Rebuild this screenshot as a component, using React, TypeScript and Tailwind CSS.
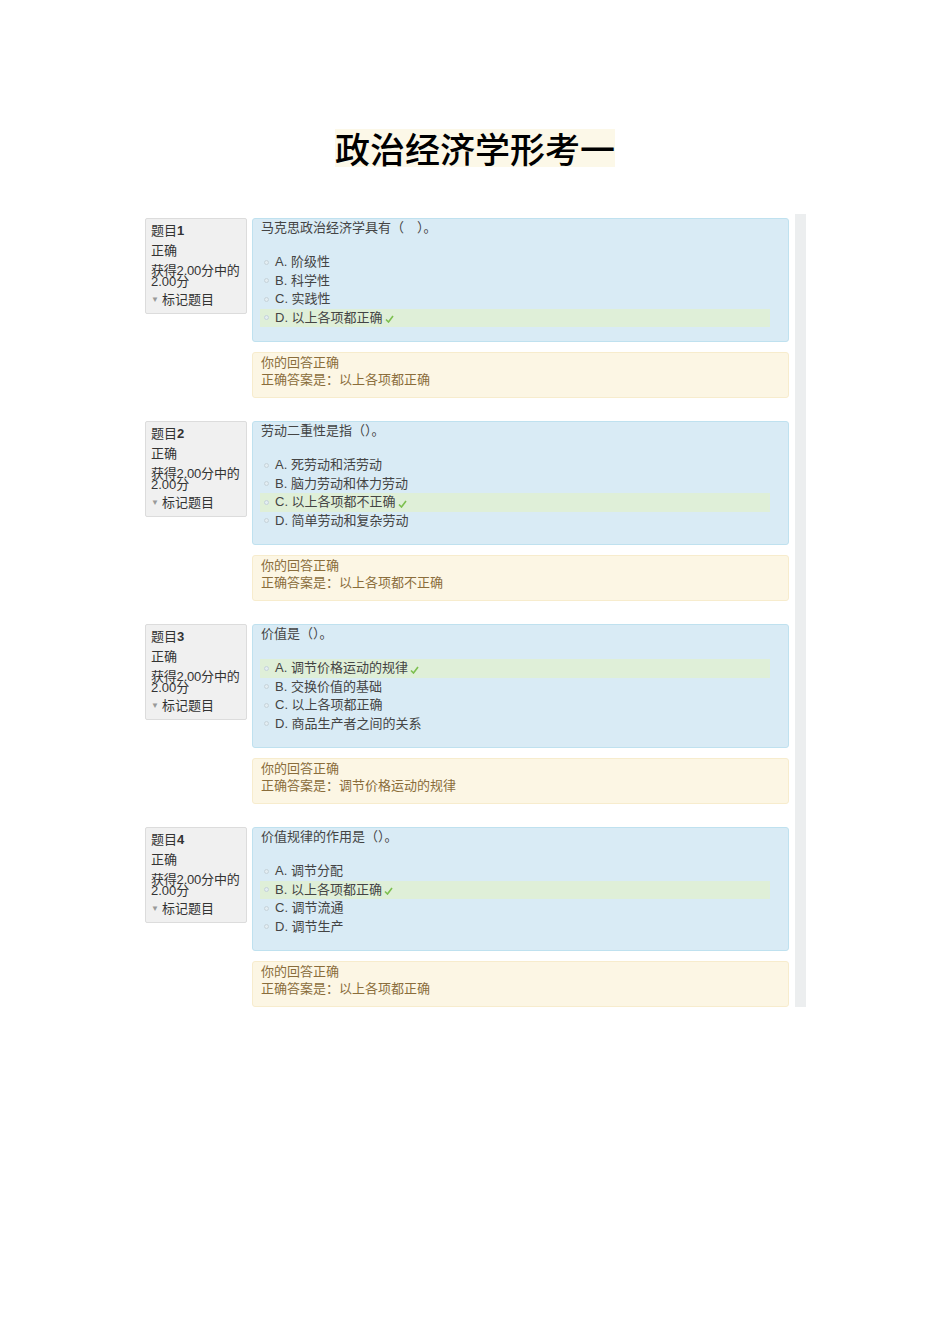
import { Fragment } from 'react';

type Question = {
  no: number;
  text: string;
  options: string[];
  correct: number;
  answer: string;
};

const questions: Question[] = [
  {
    no: 1,
    text: '马克思政治经济学具有（　）。',
    options: ['A. 阶级性', 'B. 科学性', 'C. 实践性', 'D. 以上各项都正确'],
    correct: 3,
    answer: '以上各项都正确',
  },
  {
    no: 2,
    text: '劳动二重性是指（）。',
    options: ['A. 死劳动和活劳动', 'B. 脑力劳动和体力劳动', 'C. 以上各项都不正确', 'D. 简单劳动和复杂劳动'],
    correct: 2,
    answer: '以上各项都不正确',
  },
  {
    no: 3,
    text: '价值是（）。',
    options: ['A. 调节价格运动的规律', 'B. 交换价值的基础', 'C. 以上各项都正确', 'D. 商品生产者之间的关系'],
    correct: 0,
    answer: '调节价格运动的规律',
  },
  {
    no: 4,
    text: '价值规律的作用是（）。',
    options: ['A. 调节分配', 'B. 以上各项都正确', 'C. 调节流通', 'D. 调节生产'],
    correct: 1,
    answer: '以上各项都正确',
  },
];

const font = 'font-["Liberation_Sans","Noto_Sans_CJK_SC",sans-serif]';

function Check() {
  return (
    <svg width="9" height="8" viewBox="0 0 9 8" className="ml-[2px] mt-[3px]">
      <path d="M1 4.5 L3.5 7 L8 1" fill="none" stroke="#7cbf4e" strokeWidth="1.6" />
    </svg>
  );
}

function InfoBox({ no }: { no: number }) {
  return (
    <div className="w-[102px] h-[96px] shrink-0 bg-[#f0f0f0] border border-[#dcdcdc] rounded-[2px] pl-[5px] pt-[1px] text-[13px] text-[#333] whitespace-nowrap">
      <div className="leading-[21px]">
        题目<span className="font-bold">{no}</span>
      </div>
      <div className="leading-[20px]">正确</div>
      <div className="leading-[20px] tracking-[-0.2px]">获得2.00分中的</div>
      <div className="leading-[11px] -mt-[5px]">2.00分</div>
      <div className="leading-[20px] mt-[3px] flex items-center">
        <span className="text-[8px] text-[#999] mr-[3px]">▼</span>标记题目
      </div>
    </div>
  );
}

function QuestionBlock({ q }: { q: Question }) {
  return (
    <div className="flex gap-[5px]">
      <InfoBox no={q.no} />
      <div className="w-[539px] flex flex-col">
        <div className="h-[124px] bg-[#d9ebf5] border border-[#bfe1ef] rounded-[3px] px-[7px] pt-[0px] text-[13px] text-[#444]">
          <div className="leading-[18px] pl-[1px]">{q.text}</div>
          <div className="mt-[16px] flex flex-col">
            {q.options.map((o, i) => (
              <Fragment key={o}>
                <div
                  className={`w-[510px] h-[18.5px] flex items-center pl-[4px] ${
                    i === q.correct ? 'bg-[#dfefd8]' : ''
                  }`}
                >
                  <span className="w-[5px] h-[5px] rounded-full border border-[#c5d3da] bg-[#e3edf2] mr-[6px]" />
                  <span className="leading-[18px]">{o}</span>
                  {i === q.correct && <Check />}
                </div>
              </Fragment>
            ))}
          </div>
        </div>
        <div className="mt-[10px] h-[46px] bg-[#fcf6e4] border border-[#f7eccd] rounded-[3px] px-[8px] pt-[1px] text-[13px] text-[#8a6d3b]">
          <div className="leading-[17px]">你的回答正确</div>
          <div className="leading-[17px]">正确答案是：{q.answer}</div>
        </div>
      </div>
    </div>
  );
}

export default function App() {
  return (
    <div className={`w-[950px] h-[1344px] bg-white ${font}`}>
      <div className="pt-[129px] flex justify-center">
        <h1 className='bg-[#fcf8e8] text-[35px] leading-[38px] font-medium text-black font-["Noto_Sans_CJK_SC",sans-serif]'>
          政治经济学形考一
        </h1>
      </div>
      <div className="mt-[47px] ml-[145px] flex">
        <div className="pt-[4px] flex flex-col gap-[23px] w-[644px]">
          {questions.map((q) => (
            <QuestionBlock key={q.no} q={q} />
          ))}
        </div>
        <div className="ml-[6px] w-[11px] bg-[#eceeef]" />
      </div>
    </div>
  );
}
